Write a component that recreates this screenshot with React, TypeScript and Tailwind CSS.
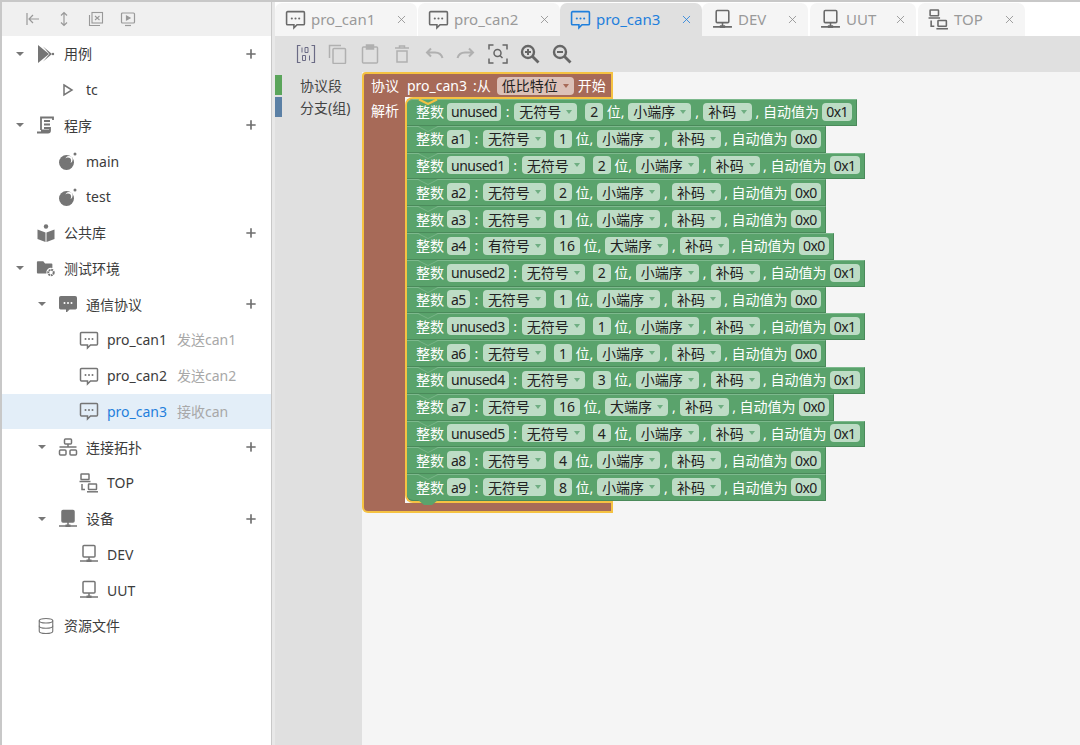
import { Database, Plus, X } from "lucide-react";
import type { ReactNode } from "react";

function ChatIcon({ size = 20, filled = false }: { size?: number; filled?: boolean }) {
  return (
    <svg width={size} height={size} viewBox="0 0 20 20" fill={filled ? "currentColor" : "none"} stroke="currentColor" strokeWidth={filled ? 1 : 1.5}>
      <path d="M2.5 2.5h15a1 1 0 0 1 1 1v10.5a1 1 0 0 1-1 1h-6l-3 3v-3h-6a1 1 0 0 1-1-1V3.500a1 1 0 0 1 1-1z" />
      <g fill={filled ? "#fff" : "currentColor"} stroke="none">
        <circle cx="6.500" cy="9" r="1" />
        <circle cx="10" cy="9" r="1" />
        <circle cx="13.500" cy="9" r="1" />
      </g>
    </svg>
  );
}

function DeviceIcon({ size = 20, filled = false }: { size?: number; filled?: boolean }) {
  return (
    <svg width={size} height={size} viewBox="0 0 20 20" fill="none" stroke="currentColor" strokeWidth="1.5">
      <rect x="4" y="1.500" width="12" height="11.500" rx="1" fill={filled ? "currentColor" : "none"} />
      <path d="M10 13v4M1 17h18" />
      <rect x="7.500" y="15.500" width="5" height="2.500" fill="currentColor" stroke="none" />
    </svg>
  );
}

function TopoIcon({ size = 20 }: { size?: number }) {
  return (
    <svg width={size} height={size} viewBox="0 0 20 20" fill="none" stroke="currentColor" strokeWidth="1.500">
      <rect x="6.500" y="2" width="7" height="5" rx="1" />
      <rect x="1.500" y="13" width="6.500" height="5" rx="1" />
      <rect x="12" y="13" width="6.500" height="5" rx="1" />
      <path d="M1.500 10h17M10 7v3" />
    </svg>
  );
}

function TopIcon({ size = 20 }: { size?: number }) {
  return (
    <svg width={size} height={size} viewBox="0 0 20 20" fill="none" stroke="currentColor" strokeWidth="1.500">
      <rect x="2" y="1" width="8" height="5.500" rx="0.500" />
      <path d="M0.500 8.500h11M3 11v5.500h3" />
      <rect x="9.500" y="11" width="8" height="5.500" rx="0.500" />
      <path d="M8 18.800h11" />
    </svg>
  );
}

function CaseIcon() {
  return (
    <svg width="20" height="20" viewBox="0 0 20 20" fill="currentColor">
      <path d="M2 1L13 10 2 19z" />
      <path d="M7 2.500L16 10 7 17.500 13.500 10z" />
      <circle cx="17" cy="10" r="1.200" />
    </svg>
  );
}

function OutlinePlay() {
  return (
    <svg width="20" height="20" viewBox="0 0 20 20" fill="none" stroke="currentColor" strokeWidth="1.500">
      <path d="M6 5l8 5-8 5z" />
    </svg>
  );
}

function ScrollIcon() {
  return (
    <svg width="20" height="20" viewBox="0 0 20 20" fill="none" stroke="currentColor" strokeWidth="1.800">
      <path d="M5 15V2.500h12V5M8 6h6M8 9.500h6M8 13h6" />
      <path d="M1 17.500h11c1.500 0 2-1 2-2H5M14 15.500V12" />
    </svg>
  );
}

function BallIcon() {
  return (
    <svg width="20" height="20" viewBox="0 0 20 20" fill="currentColor">
      <circle cx="8.500" cy="11.500" r="7.500" />
      <circle cx="11" cy="8.500" r="3.600" fill="#ffffff" />
      <circle cx="9.800" cy="9.800" r="3.300" />
      <circle cx="17" cy="3" r="1.500" />
    </svg>
  );
}

function BookIcon() {
  return (
    <svg width="20" height="20" viewBox="0 0 20 20" fill="currentColor">
      <circle cx="10" cy="3.500" r="2.200" />
      <path d="M1.500 6.500l8 3V19l-8-3zM18.500 6.500l-8 3V19l8-3z" />
    </svg>
  );
}

function FolderGear() {
  return (
    <svg width="22" height="20" viewBox="0 0 22 20" fill="currentColor">
      <path d="M1 3.500a1 1 0 0 1 1-1h6l2 2.500h7a1 1 0 0 1 1 1V10a5 5 0 0 0-6.500 6H2a1 1 0 0 1-1-1z" />
      <circle cx="16.500" cy="15" r="3" fill="none" stroke="currentColor" strokeWidth="2.200" strokeDasharray="2 0.800" />
    </svg>
  );
}

function ToolbarIcon({ children }: { children: ReactNode }) {
  return <div className="flex h-5 w-8 items-center justify-center">{children}</div>;
}

function SideTools() {
  return (
    <div className="flex h-[34px] items-center bg-[#f0f0f0] pl-[14px] text-[#999999]">
      <ToolbarIcon>
        <svg width="16" height="16" viewBox="0 0 16 16" fill="none" stroke="currentColor" strokeWidth="1.200">
          <path d="M3 2v12M15 8H5M9 4L5 8l4 4" />
        </svg>
      </ToolbarIcon>
      <ToolbarIcon>
        <svg width="16" height="16" viewBox="0 0 16 16" fill="none" stroke="currentColor" strokeWidth="1.200">
          <path d="M8 2v12M5 4.500L8 1.500l3 3M5 11.500l3 3 3-3" />
        </svg>
      </ToolbarIcon>
      <ToolbarIcon>
        <svg width="16" height="16" viewBox="0 0 16 16" fill="none" stroke="currentColor" strokeWidth="1.100">
          <rect x="4" y="1.500" width="10.500" height="10.500" />
          <path d="M1.500 4v10.500H12M7 5l4.500 4M11.500 5L7 9" />
        </svg>
      </ToolbarIcon>
      <ToolbarIcon>
        <svg width="16" height="16" viewBox="0 0 16 16" fill="none" stroke="currentColor" strokeWidth="1.200">
          <rect x="1.500" y="2" width="13" height="10" rx="1" />
          <path d="M6.500 5l3.500 2-3.500 2z" fill="currentColor" />
          <path d="M5 14.500h6" />
        </svg>
      </ToolbarIcon>
    </div>
  );
}

type TreeItem = {
  level: 0 | 1 | 2;
  label: string;
  note?: string;
  icon: ReactNode;
  caret?: boolean;
  plus?: boolean;
  active?: boolean;
};

const treeItems: TreeItem[] = [
  { level: 0, label: "用例", icon: <CaseIcon />, caret: true, plus: true },
  { level: 1, label: "tc", icon: <OutlinePlay /> },
  { level: 0, label: "程序", icon: <ScrollIcon />, caret: true, plus: true },
  { level: 1, label: "main", icon: <BallIcon /> },
  { level: 1, label: "test", icon: <BallIcon /> },
  { level: 0, label: "公共库", icon: <BookIcon />, plus: true },
  { level: 0, label: "测试环境", icon: <FolderGear />, caret: true },
  { level: 1, label: "通信协议", icon: <ChatIcon filled />, caret: true, plus: true },
  { level: 2, label: "pro_can1", note: "发送can1", icon: <ChatIcon /> },
  { level: 2, label: "pro_can2", note: "发送can2", icon: <ChatIcon /> },
  { level: 2, label: "pro_can3", note: "接收can", icon: <ChatIcon />, active: true },
  { level: 1, label: "连接拓扑", icon: <TopoIcon />, caret: true, plus: true },
  { level: 2, label: "TOP", icon: <TopIcon /> },
  { level: 1, label: "设备", icon: <DeviceIcon filled />, caret: true, plus: true },
  { level: 2, label: "DEV", icon: <DeviceIcon /> },
  { level: 2, label: "UUT", icon: <DeviceIcon /> },
  { level: 0, label: "资源文件", icon: <Database size={18} strokeWidth={1.500} /> },
];

function TreeRow({ item }: { item: TreeItem }) {
  const indent = item.level === 0 ? "pl-[8px]" : item.level === 1 ? "pl-[30px]" : "pl-[51px]";
  return (
    <div className={`flex h-[35.75px] items-center pr-[13px] text-[14px] ${indent} ${item.active ? "bg-[#e3eef8]" : ""}`}>
      <div className="mr-[6px] flex w-5 justify-center">
        {item.caret && <div className="h-0 w-0 border-x-[4px] border-t-[4px] border-x-transparent border-t-[#777777]" />}
      </div>
      <div className="mr-[8px] flex w-5 justify-center text-[#757575]">{item.icon}</div>
      <span className={item.active ? "text-[#1f7fdc]" : "text-[#3c3c3c]"}>{item.label}</span>
      {item.note && <span className="ml-[10px] text-[#a8a8a8]">{item.note}</span>}
      {item.plus && <Plus size={14} strokeWidth={2.800} className="ml-auto text-[#6e6e6e]" />}
    </div>
  );
}

function Sidebar() {
  return (
    <aside className="h-full w-[272px] shrink-0 border-r border-l-2 border-[#c8c8c8] bg-white">
      <SideTools />
      {treeItems.map((item) => (
        <TreeRow key={item.label} item={item} />
      ))}
    </aside>
  );
}

type TabInfo = { label: string; width: string; icon: ReactNode; active?: boolean; mr?: string };

const tabs: TabInfo[] = [
  { label: "pro_can1", width: "w-[142px]", icon: <ChatIcon size={21} />, mr: "mr-px" },
  { label: "pro_can2", width: "w-[142px]", icon: <ChatIcon size={21} /> },
  { label: "pro_can3", width: "w-[142px]", icon: <ChatIcon size={21} />, active: true },
  { label: "DEV", width: "w-[106px]", icon: <DeviceIcon size={21} />, mr: "mr-[2px]" },
  { label: "UUT", width: "w-[106px]", icon: <DeviceIcon size={21} />, mr: "mr-[2px]" },
  { label: "TOP", width: "w-[107px]", icon: <TopIcon size={21} /> },
];

function Tab({ tab }: { tab: TabInfo }) {
  return (
    <div
      className={`flex h-[33px] items-center rounded-t-[7px] pr-[9px] pl-[10px] text-[15px] ${tab.width} ${tab.mr ?? ""} ${
        tab.active ? "bg-[#e0e0e0] text-[#1f7fdc]" : "bg-[#f5f5f5] text-[#9a9a9a]"
      }`}
    >
      <div className={`mr-[5px] ${tab.active ? "" : "text-[#6a6a6a]"}`}>{tab.icon}</div>
      <span>{tab.label}</span>
      <X size={13} strokeWidth={1.500} className={`ml-auto ${tab.active ? "" : "text-[#8c8c8c]"}`} />
    </div>
  );
}

function EditTools() {
  return (
    <div className="flex h-9 items-center bg-[#e0e0e0] pl-[15px] text-[#b0b0b0]">
      <ToolbarIcon>
        <svg width="20" height="20" viewBox="0 0 20 20" fill="none" stroke="#6b6b85" strokeWidth="1.200">
          <path d="M4.500 1.500H1.500v17h3M15.500 1.500h3v17h-3" />
          <path d="M6 3.500v5M9 3.500h3v5H9zM6.500 11.500h3v5h-3zM13.500 11.500v5" strokeWidth="1" />
        </svg>
      </ToolbarIcon>
      <ToolbarIcon>
        <svg width="20" height="20" viewBox="0 0 20 20" fill="none" stroke="currentColor" strokeWidth="1.500">
          <path d="M1.500 14V1.500H13" />
          <rect x="5" y="4.500" width="12.500" height="15" rx="1" />
        </svg>
      </ToolbarIcon>
      <ToolbarIcon>
        <svg width="20" height="20" viewBox="0 0 20 20" fill="none" stroke="currentColor" strokeWidth="1.500">
          <rect x="2.500" y="3" width="15" height="16" rx="1" />
          <rect x="6.500" y="1" width="7" height="4" fill="currentColor" />
        </svg>
      </ToolbarIcon>
      <ToolbarIcon>
        <svg width="20" height="20" viewBox="0 0 20 20" fill="none" stroke="currentColor" strokeWidth="1.500">
          <path d="M3 4h14M7.500 4V2h5v2M5 7h10v11H5z" />
        </svg>
      </ToolbarIcon>
      <ToolbarIcon>
        <svg width="20" height="20" viewBox="0 0 20 20" fill="none" stroke="currentColor" strokeWidth="2">
          <path d="M18.500 14c-1-3.500-4-5.500-7.500-5.500H3M7 4.500L3 8.500l4 4" />
        </svg>
      </ToolbarIcon>
      <ToolbarIcon>
        <svg width="20" height="20" viewBox="0 0 20 20" fill="none" stroke="currentColor" strokeWidth="2">
          <path d="M1.500 14C2.500 10.500 5.500 8.500 9 8.500h8M13 4.500l4 4-4 4" />
        </svg>
      </ToolbarIcon>
      <ToolbarIcon>
        <svg width="20" height="20" viewBox="0 0 20 20" fill="none" stroke="#666666" strokeWidth="1.500">
          <path d="M1 5.500V1h4.500M14.500 1H19v4.500M19 14.500V19h-4.500M5.500 19H1v-4.500" />
          <circle cx="9.500" cy="9" r="3.500" />
          <path d="M12 11.500l2.500 2.500" />
        </svg>
      </ToolbarIcon>
      <ToolbarIcon>
        <svg width="20" height="20" viewBox="0 0 20 20" fill="none" stroke="#666666" strokeWidth="2.400">
          <circle cx="8" cy="8" r="6" />
          <path d="M12.500 12.500L18.500 18.500" strokeWidth="2.800" />
          <path d="M5 8h6M8 5v6" strokeWidth="2" />
        </svg>
      </ToolbarIcon>
      <ToolbarIcon>
        <svg width="20" height="20" viewBox="0 0 20 20" fill="none" stroke="#666666" strokeWidth="2.400">
          <circle cx="8" cy="8" r="6" />
          <path d="M12.500 12.500L18.500 18.500" strokeWidth="2.800" />
          <path d="M5 8h6" strokeWidth="2" />
        </svg>
      </ToolbarIcon>
    </div>
  );
}

function Category({ label, bar }: { label: string; bar: string }) {
  return (
    <div className="mb-[2px] flex h-5 items-center text-[14px] text-[#444444]">
      <div className={`mr-[18px] h-5 w-[7px] ${bar}`} />
      <span>{label}</span>
    </div>
  );
}

function Field({ children, tight = false }: { children: ReactNode; tight?: boolean }) {
  return (
    <span className={`flex h-[18px] items-center rounded-[4px] bg-[#bddcc5] text-[#222222] ${tight ? "px-[4px] tracking-[-0.5px]" : "px-[5px]"}`}>
      {children}
    </span>
  );
}

function Drop({ label, brown = false }: { label: string; brown?: boolean }) {
  return (
    <span className={`flex h-[18px] items-center rounded-[4px] pl-[5px] text-[#222222] ${brown ? "bg-[#dcc1b8]" : "bg-[#bddcc5]"}`}>
      {label}
      <span className="flex w-[16px] justify-center">
        <span className={`h-0 w-0 border-x-[3px] border-t-[4px] border-x-transparent ${brown ? "border-t-[#a76a58]" : "border-t-[#6fae82]"}`} />
      </span>
    </span>
  );
}

type BlockRow = { name: string; sign: string; bits: number; order: string; auto: string };

const small = "小端序";
const big = "大端序";
const plain = "无符号";

const rows: BlockRow[] = [
  { name: "unused", sign: plain, bits: 2, order: small, auto: "0x1" },
  { name: "a1", sign: plain, bits: 1, order: small, auto: "0x0" },
  { name: "unused1", sign: plain, bits: 2, order: small, auto: "0x1" },
  { name: "a2", sign: plain, bits: 2, order: small, auto: "0x0" },
  { name: "a3", sign: plain, bits: 1, order: small, auto: "0x0" },
  { name: "a4", sign: "有符号", bits: 16, order: big, auto: "0x0" },
  { name: "unused2", sign: plain, bits: 2, order: small, auto: "0x1" },
  { name: "a5", sign: plain, bits: 1, order: small, auto: "0x0" },
  { name: "unused3", sign: plain, bits: 1, order: small, auto: "0x1" },
  { name: "a6", sign: plain, bits: 1, order: small, auto: "0x0" },
  { name: "unused4", sign: plain, bits: 3, order: small, auto: "0x1" },
  { name: "a7", sign: plain, bits: 16, order: big, auto: "0x0" },
  { name: "unused5", sign: plain, bits: 4, order: small, auto: "0x1" },
  { name: "a8", sign: plain, bits: 4, order: small, auto: "0x0" },
  { name: "a9", sign: plain, bits: 8, order: small, auto: "0x0" },
];

function FieldRow({ row, first, last }: { row: BlockRow; first: boolean; last: boolean }) {
  return (
    <div
      className={`relative flex h-[26.8px] w-max items-center border-t border-r border-b border-t-[#7db98d] border-r-[#4a8a5a] border-b-[#4a8a5a] bg-[#5aa36c] pr-[4px] pb-px pl-[9px] text-[14px] text-white ${
        first ? "rounded-tl-[6px]" : ""
      } ${last ? "rounded-bl-[6px]" : ""}`}
    >
      {first ? (
        <svg className="absolute top-[-3px] left-[10px]" width="22" height="8" viewBox="0 0 22 8">
          <path d="M2 2.500l9 4.500 9-4.500" fill="none" stroke="#f5c242" strokeWidth="2" />
        </svg>
      ) : (
        <svg className="absolute top-[-1px] left-[10px]" width="22" height="7" viewBox="0 0 22 7">
          <path d="M1 0l10 5 10-5z" fill="#5aa36c" />
          <path d="M1 0.500l10 5 10-5" fill="none" stroke="#7db98d" strokeWidth="0.800" />
        </svg>
      )}
      {last && (
        <svg className="absolute bottom-[-6px] left-[10px]" width="22" height="6" viewBox="0 0 22 6">
          <path d="M1 0h20l-6 5h-8z" fill="#5aa36c" />
        </svg>
      )}
      <span className="relative mr-[3px]">整数</span>
      <Field tight>{row.name}</Field>
      <span className="w-[13px] text-center">:</span>
      <Drop label={row.sign} />
      <span className="w-2" />
      <Field>{row.bits}</Field>
      <span className="w-[25px] text-center">位,</span>
      <Drop label={row.order} />
      <span className="w-[12px] text-center">,</span>
      <Drop label="补码" />
      <span className="w-[70px] text-center whitespace-nowrap">, 自动值为</span>
      <Field tight>{row.auto}</Field>
    </div>
  );
}

function ProtocolBlock() {
  return (
    <div className="w-[251px] text-[14px] text-white">
      <div className="flex h-[25px] items-center rounded-tl-[4px] border-t-2 border-r-2 border-l-2 border-[#f5c242] bg-[#a76a58] pl-[7px]">
        <span>协议</span>
        <span className="ml-2">pro_can3</span>
        <span className="mr-[6px] ml-[6px]">:从</span>
        <Drop label="低比特位" brown />
        <span className="ml-1">开始</span>
      </div>
      <div className="flex">
        <div className="w-[43px] border-l-2 border-[#f5c242] bg-[#a76a58] pt-[3px] pl-[7px]">解析</div>
        <div className="w-[208px] rounded-l-[8px] border-y-2 border-l-2 border-[#f5c242] bg-[#a76a58]">
          {rows.map((row, i) => (
            <FieldRow key={row.name} row={row} first={i === 0} last={i === rows.length - 1} />
          ))}
        </div>
      </div>
      <div className="h-[10px] rounded-bl-[6px] border-r-2 border-b-2 border-l-2 border-[#f5c242] bg-[#a76a58]" />
    </div>
  );
}

export default function App() {
  return (
    <div className="flex h-[745px] w-[1080px] overflow-hidden border-t-2 border-[#c8c8c8] bg-[#e8e8e8] [font-family:'Noto_Sans','Noto_Sans_CJK_SC',sans-serif]">
      <Sidebar />
      <main className="ml-[3px] flex min-w-0 flex-1 flex-col">
        <div className="flex bg-white pt-px">
          {tabs.map((tab) => (
            <Tab key={tab.label} tab={tab} />
          ))}
        </div>
        <EditTools />
        <div className="flex flex-1">
          <div className="w-[87px] bg-[#e0e0e0] pt-[3px]">
            <Category label="协议段" bar="bg-[#5ba55b]" />
            <Category label="分支(组)" bar="bg-[#5b80a5]" />
          </div>
          <div className="flex-1 bg-[#f5f5f5]">
            <ProtocolBlock />
          </div>
        </div>
      </main>
    </div>
  );
}
